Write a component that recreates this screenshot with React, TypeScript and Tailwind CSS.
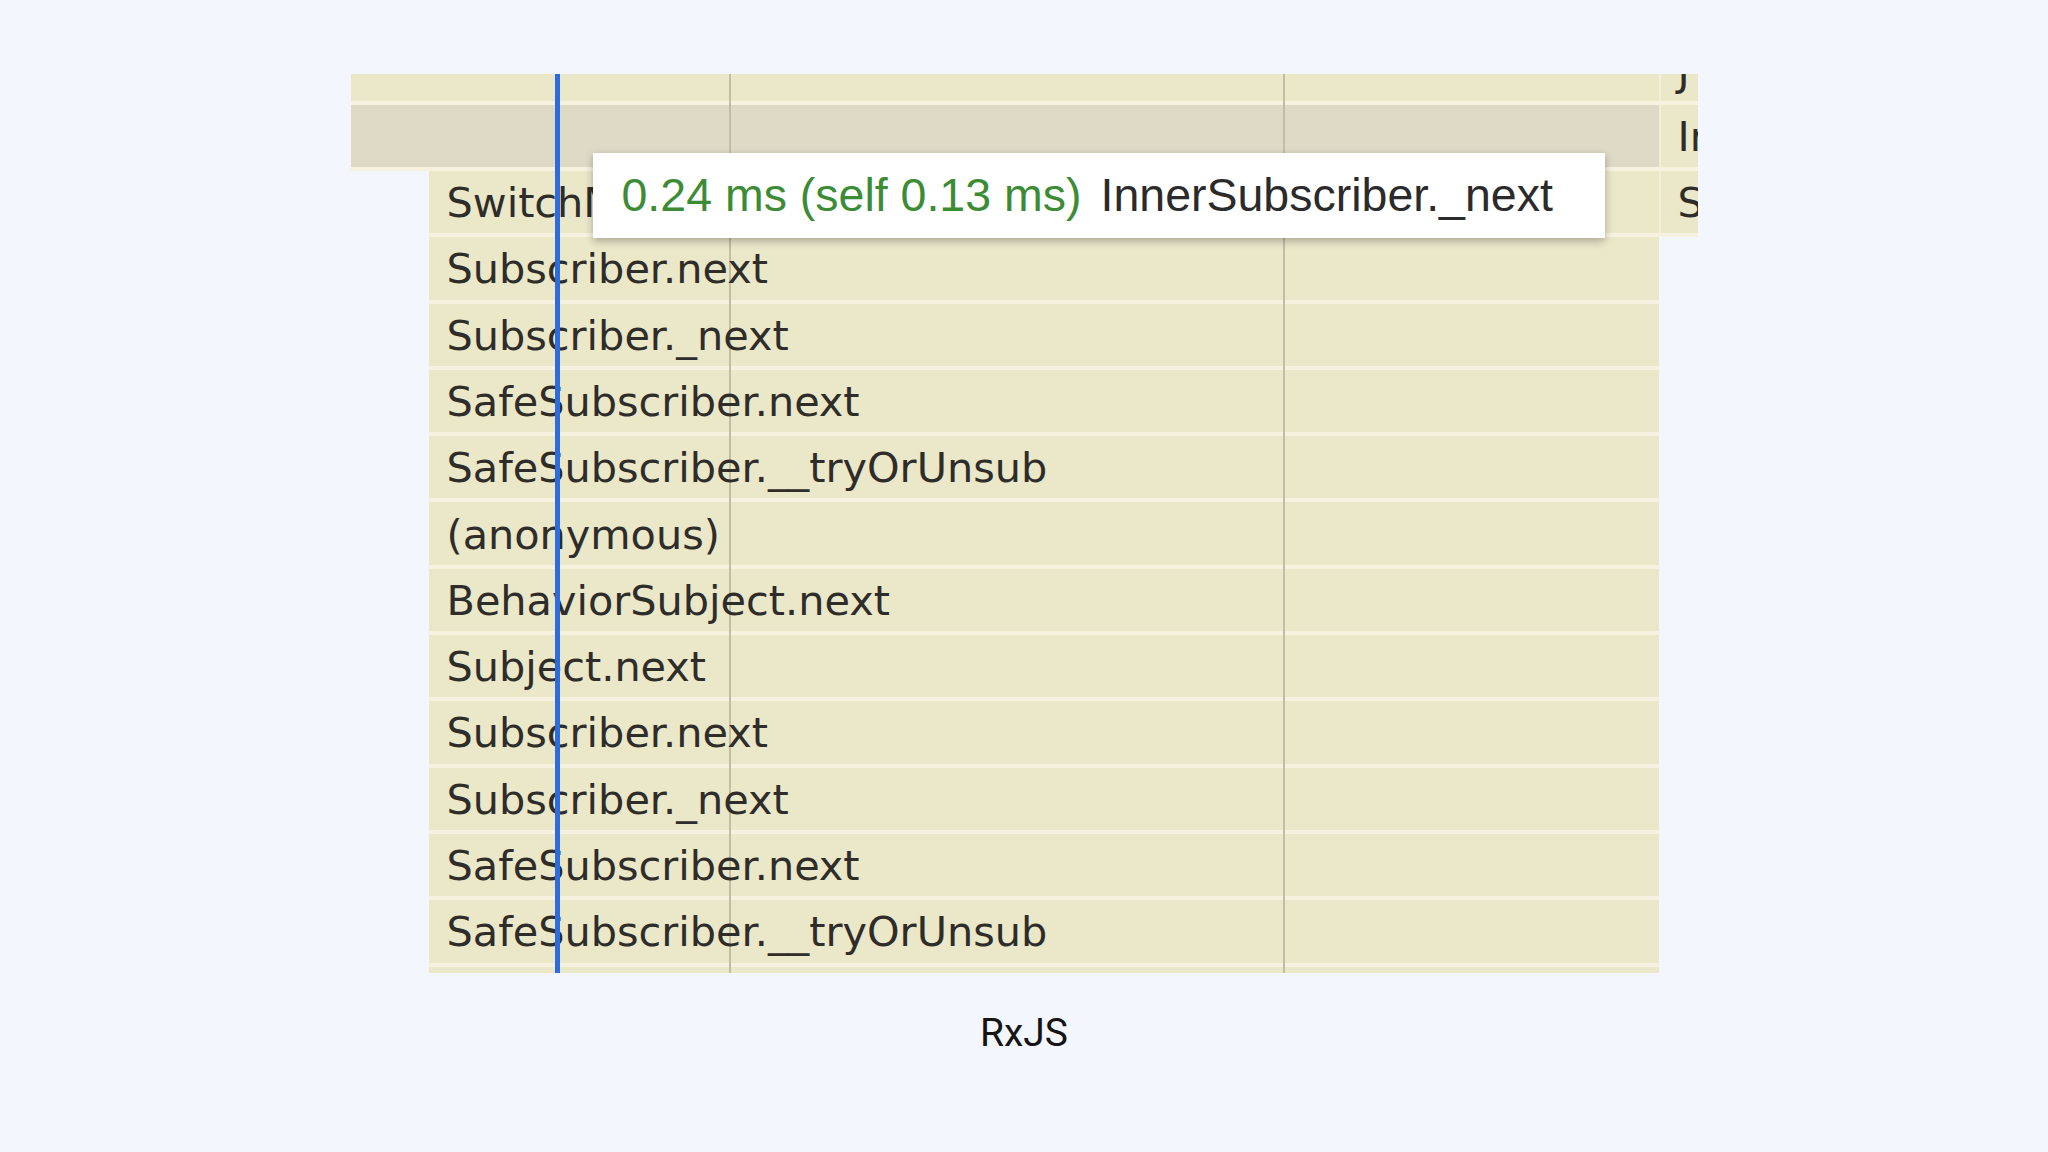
const labels = [
  'SwitchMapSubscriber.notifyNext',
  'Subscriber.next',
  'Subscriber._next',
  'SafeSubscriber.next',
  'SafeSubscriber.__tryOrUnsub',
  '(anonymous)',
  'BehaviorSubject.next',
  'Subject.next',
  'Subscriber.next',
  'Subscriber._next',
  'SafeSubscriber.next',
  'SafeSubscriber.__tryOrUnsub',
  '',
]

function SideCell({ text }: { text: string }) {
  return (
    <div className="w-[39px] shrink-0 overflow-hidden whitespace-nowrap border-l-2 border-[#f4efdb] bg-[#ebe7c9] pl-[17px] pt-[2px] flex items-center">
      <span className="relative z-10">{text}</span>
    </div>
  )
}

export default function App() {
  return (
    <div className="min-h-screen w-full bg-[#f3f6fd] flex flex-col items-center pt-[74px]">
      <div className="relative w-[1347px] h-[899px] overflow-hidden font-['DejaVu_Sans',sans-serif] text-[41.4px] text-[#2e2d2a]">
        <div className="-mt-[35.6px] flex flex-col">
          {/* row cut off by the top edge */}
          <div className="h-[66.3px] flex border-b-[4.5px] border-[#f7f2df]">
            <div className="flex-1 bg-[#ebe7c9]" />
            <SideCell text="J" />
          </div>

          {/* highlighted row */}
          <div className="h-[66.3px] flex border-b-[4.5px] border-[#f7f2df]">
            <div className="flex-1 bg-[#dedac6]" />
            <SideCell text="InnerSubscriber" />
          </div>

          {labels.map((label, i) => (
            <div
              key={i}
              className={
                i === 0
                  ? 'h-[66.3px] ml-[78px] flex border-b-[4.5px] border-[#f7f2df]'
                  : 'h-[66.3px] ml-[78px] mr-[39px] flex border-b-[4.5px] border-[#f7f2df]'
              }
            >
              <div className="flex-1 bg-[#ebe7c9] pl-[18px] pt-[2px] flex items-center whitespace-nowrap overflow-hidden">
                <span className="relative z-10">{label}</span>
              </div>
              {i === 0 && <SideCell text="SwitchMap" />}
            </div>
          ))}
        </div>

        {/* time grid lines */}
        <div className="absolute top-0 bottom-0 left-[378px] w-[2px] bg-[#c2bda6]" />
        <div className="absolute top-0 bottom-0 left-[932px] w-[2px] bg-[#c2bda6]" />

        {/* cursor */}
        <div className="absolute z-20 top-0 bottom-0 left-[204px] w-[5px] bg-[#2d6cdf]" />

        {/* tooltip */}
        <div className="absolute z-30 left-[242px] top-[79px] w-[1012px] h-[85px] bg-white shadow-[0_3px_8px_rgba(0,0,0,0.28)] flex items-center gap-[19px] pl-[29px] whitespace-nowrap font-['Liberation_Sans',Arial,sans-serif] text-[46.5px]">
          <span className="text-[#3c8c36]">0.24 ms (self 0.13 ms)</span>
          <span className="text-[#2b2b2b]">InnerSubscriber._next</span>
        </div>
      </div>

      <p className="mt-[38px] font-['Roboto',sans-serif] text-[39px] leading-[45px] text-[#151515]">
        RxJS
      </p>
    </div>
  )
}
